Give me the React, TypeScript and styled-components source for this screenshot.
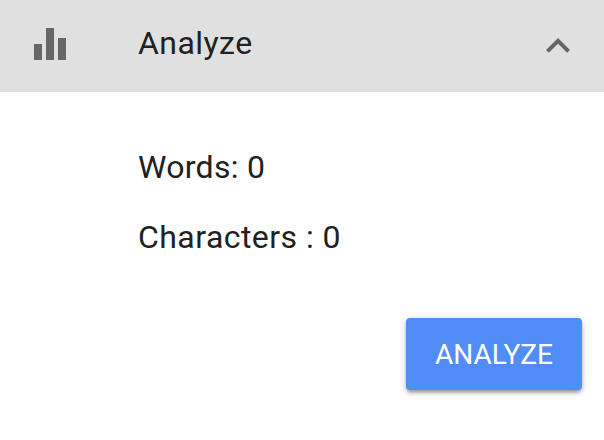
import React from "react";
import styled, { createGlobalStyle } from "styled-components";

const GlobalStyle = createGlobalStyle`
  * { box-sizing: border-box; }
  body { margin: 0; background: #fff; font-family: Roboto, sans-serif; color: #212121; overflow: hidden; }
`;
const Panel = styled.section`
  width: 604px;
  height: 440px;
  background: #fff;
`;
const Header = styled.header`
  display: grid;
  grid-template-columns: 104px 1fr 48px;
  align-items: center;
  height: 92px;
  padding: 0 22px 0 34px;
  background: #e0e0e0;
`;
const Title = styled.h1`
  margin: 0;
  padding-bottom: 6px;
  font-size: 32px;
  line-height: 40px;
  font-weight: 400;
  letter-spacing: 0.45px;
`;
const BarsIcon = styled.svg`
  display: block;
  width: 32px;
  height: 32px;
  margin-top: -4px;
  fill: #666;
`;
const ChevronIcon = styled.svg`
  display: block;
  width: 48px;
  height: 48px;
  fill: #666;
`;
const Stats = styled.div`
  padding: 55px 0 0 138px;
`;
const Stat = styled.p<{ $tracking: number }>`
  margin: 0 0 30px;
  font-size: 32px;
  line-height: 40px;
  letter-spacing: ${({ $tracking }) => $tracking}px;
`;
const Actions = styled.div`
  display: flex;
  justify-content: flex-end;
  padding: 31px 22px 0;
`;
const Button = styled.button`
  width: 176px;
  height: 72px;
  padding: 1px 0 0;
  border: 0;
  border-radius: 4px;
  background: #518df8;
  color: #fff;
  font: 400 28px/71px Roboto, sans-serif;
  letter-spacing: 0;
  box-shadow: 0 3px 4px -1px rgba(0, 0, 0, 0.42), 0 1px 8px rgba(0, 0, 0, 0.14);
`;

export default function App() {
  return (
    <Panel>
      <GlobalStyle />
      <Header>
        <BarsIcon viewBox="0 0 32 32"><path d="M0 16h8v16H0zM12 0h8v32h-8zM24 10h8v22h-8z" /></BarsIcon>
        <Title>Analyze</Title>
        <ChevronIcon viewBox="0 0 24 24"><path d="M12 8l-6 6 1.41 1.41L12 10.83l4.59 4.58L18 14z" /></ChevronIcon>
      </Header>
      <Stats>
        <Stat $tracking={0.3}>Words: 0</Stat>
        <Stat $tracking={0.45}>Characters : 0</Stat>
      </Stats>
      <Actions>
        <Button>ANALYZE</Button>
      </Actions>
    </Panel>
  );
}
